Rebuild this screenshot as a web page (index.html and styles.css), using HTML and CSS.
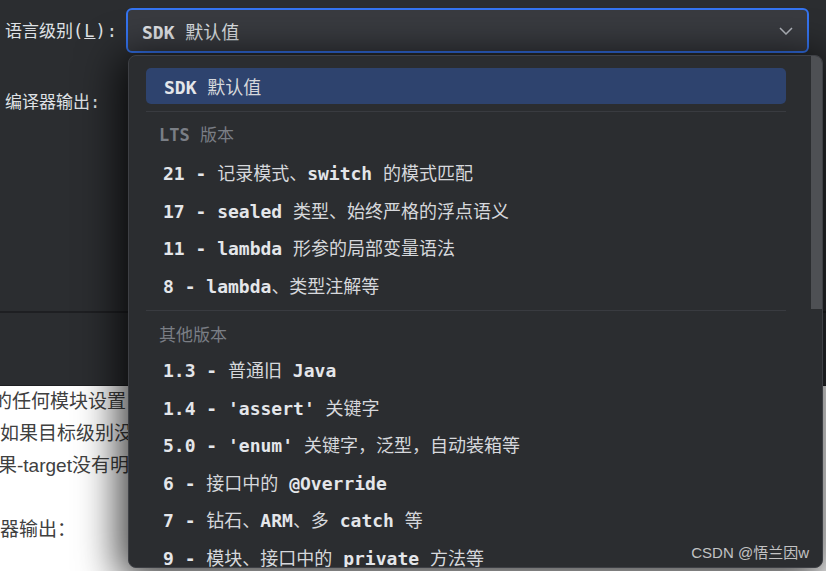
FILE: index.html
```html
<!DOCTYPE html>
<html lang="zh-CN">
<head>
  <meta charset="UTF-8">
  <title>语言级别</title>
  <link rel="stylesheet" href="styles.css">
</head>
<body>
  <div class="settings">
    <div class="row">
      <label class="label">语言级别<span class="mono">(<u>L</u>):</span></label>
      <div class="combo">
        <span class="combo-value"><span class="code">SDK </span>默认值</span>
        <svg class="chevron" width="14" height="8" viewBox="0 0 14 8">
          <path d="M1 1 L7 7 L13 1" fill="none" stroke="#b4b8bf" stroke-width="1.5"/>
        </svg>
      </div>
    </div>
    <div class="row row-output">
      <label class="label">编译器输出<span class="mono">:</span></label>
    </div>
  </div>
  <div class="divider"></div>
  <div class="band"></div>

  <div class="article">
    <p class="line line-cut">的任何模块设置</p>
    <p class="line">如果目标级别没</p>
    <p class="line line-cut2">果-target没有明</p>
    <p class="line"></p>
    <p class="line">器输出：</p>
  </div>

  <!-- 下拉列表 -->
  <div class="popup">
    <div class="thumb"></div>
    <ul class="list">
      <li class="item selected"><span class="code">SDK </span>默认值</li>
      <li class="sep"></li>
      <li class="group group-lts"><span class="mono">LTS </span>版本</li>
      <li class="item"><span class="code">21 - </span>记录模式、<span class="code">switch </span>的模式匹配</li>
      <li class="item"><span class="code">17 - sealed </span>类型、始终严格的浮点语义</li>
      <li class="item"><span class="code">11 - lambda </span>形参的局部变量语法</li>
      <li class="item"><span class="code">8 - lambda</span>、类型注解等</li>
      <li class="sep sep-other"></li>
      <li class="group group-other">其他版本</li>
      <li class="item"><span class="code">1.3 - </span>普通旧<span class="code"> Java</span></li>
      <li class="item"><span class="code">1.4 - 'assert' </span>关键字</li>
      <li class="item"><span class="code">5.0 - 'enum' </span>关键字，泛型，自动装箱等</li>
      <li class="item"><span class="code">6 - </span>接口中的<span class="code"> @Override</span></li>
      <li class="item"><span class="code">7 - </span>钻石、<span class="code">ARM</span>、多<span class="code"> catch </span>等</li>
      <li class="item"><span class="code">9 - </span>模块、接口中的<span class="code"> private </span>方法等</li>
    </ul>
  </div>

  <div class="watermark">CSDN @悟兰因w</div>
</body>
</html>
```

FILE: styles.css
```css
body {
  margin: 0;
  padding: 0;
  background-color: #2b2d30;
  font-family: "Noto Sans CJK SC", sans-serif;
  color: #dfe1e5;
  overflow: hidden;
}
.settings {
  height: 311px;
  padding-top: 8px;
  box-sizing: border-box;
}
.row {
  display: flex;
  align-items: center;
  padding-left: 5px;
}
.label {
  width: 121px;
  font-size: 17px;
  line-height: 24px;
  color: #dfe1e5;
}
.mono {
  font-family: "DejaVu Sans Mono", monospace;
  letter-spacing: 1px;
}
.row-output {
  margin-top: 36px;
}
.combo {
  width: 683px;
  height: 45px;
  box-sizing: border-box;
  border: 2px solid #3574f0;
  border-radius: 6px;
  background-color: #393b40;
  display: flex;
  align-items: center;
  justify-content: space-between;
  padding: 0 14px 0 14px;
  font-size: 18px;
}
.code {
  font-family: "DejaVu Sans Mono", monospace;
  font-weight: bold;
  white-space: pre;
  color: #e4e6ea;
}
.chevron {
  display: block;
}
.divider {
  height: 2px;
  background-color: #1e1f22;
}
.band {
  height: 72px;
  background-color: #2b2d30;
  border-bottom: 1px solid #1e1f22;
}
.article {
  background-color: #ffffff;
  height: 200px;
  font-family: "Liberation Sans", "Noto Sans CJK SC", sans-serif;
  font-size: 19px;
  color: #404040;
}
.line {
  margin: 0;
  height: 32px;
  line-height: 32px;
  white-space: nowrap;
}
.line-cut {
  margin-left: -7px;
}
.line-cut2 {
  margin-left: -2px;
}
.popup {
  position: absolute;
  left: 128px;
  top: 55px;
  width: 695px;
  height: 513px;
  box-sizing: border-box;
  border: 1px solid #3e4045;
  border-radius: 8px;
  background-color: #2b2d30;
  box-shadow: -4px 6px 40px 6px rgba(0, 0, 0, 0.75);
  overflow: hidden;
}
.thumb {
  position: absolute;
  right: 0;
  top: 0;
  width: 11px;
  height: 253px;
  background-color: #4e5054;
}
.list {
  list-style: none;
  margin: 0;
  padding: 12px 0 0 17px;
  width: 640px;
}
.item {
  height: 37.5px;
  line-height: 37.5px;
  padding-left: 17px;
  font-size: 18px;
  white-space: nowrap;
  color: #d6d8dc;
}
.item.selected {
  height: 36px;
  line-height: 36px;
  padding-left: 18px;
  background-color: #2e436e;
  border-radius: 5px;
}
.sep {
  height: 1px;
  margin-top: 7px;
  background-color: #393b40;
}
.sep-other {
  margin-top: 6px;
}
.group {
  font-size: 17px;
  line-height: 20px;
  color: #7a7e85;
  padding-left: 13px;
}
.group .mono {
  letter-spacing: 0;
  font-weight: bold;
}
.group-lts {
  padding-top: 12px;
  padding-bottom: 9px;
}
.group-other {
  padding-top: 13px;
  padding-bottom: 7px;
}
.watermark {
  position: absolute;
  right: 17px;
  top: 543px;
  font-family: "Liberation Sans", "Noto Sans CJK SC", sans-serif;
  font-size: 15px;
  line-height: 20px;
  color: rgba(255, 255, 255, 0.72);
}
```
